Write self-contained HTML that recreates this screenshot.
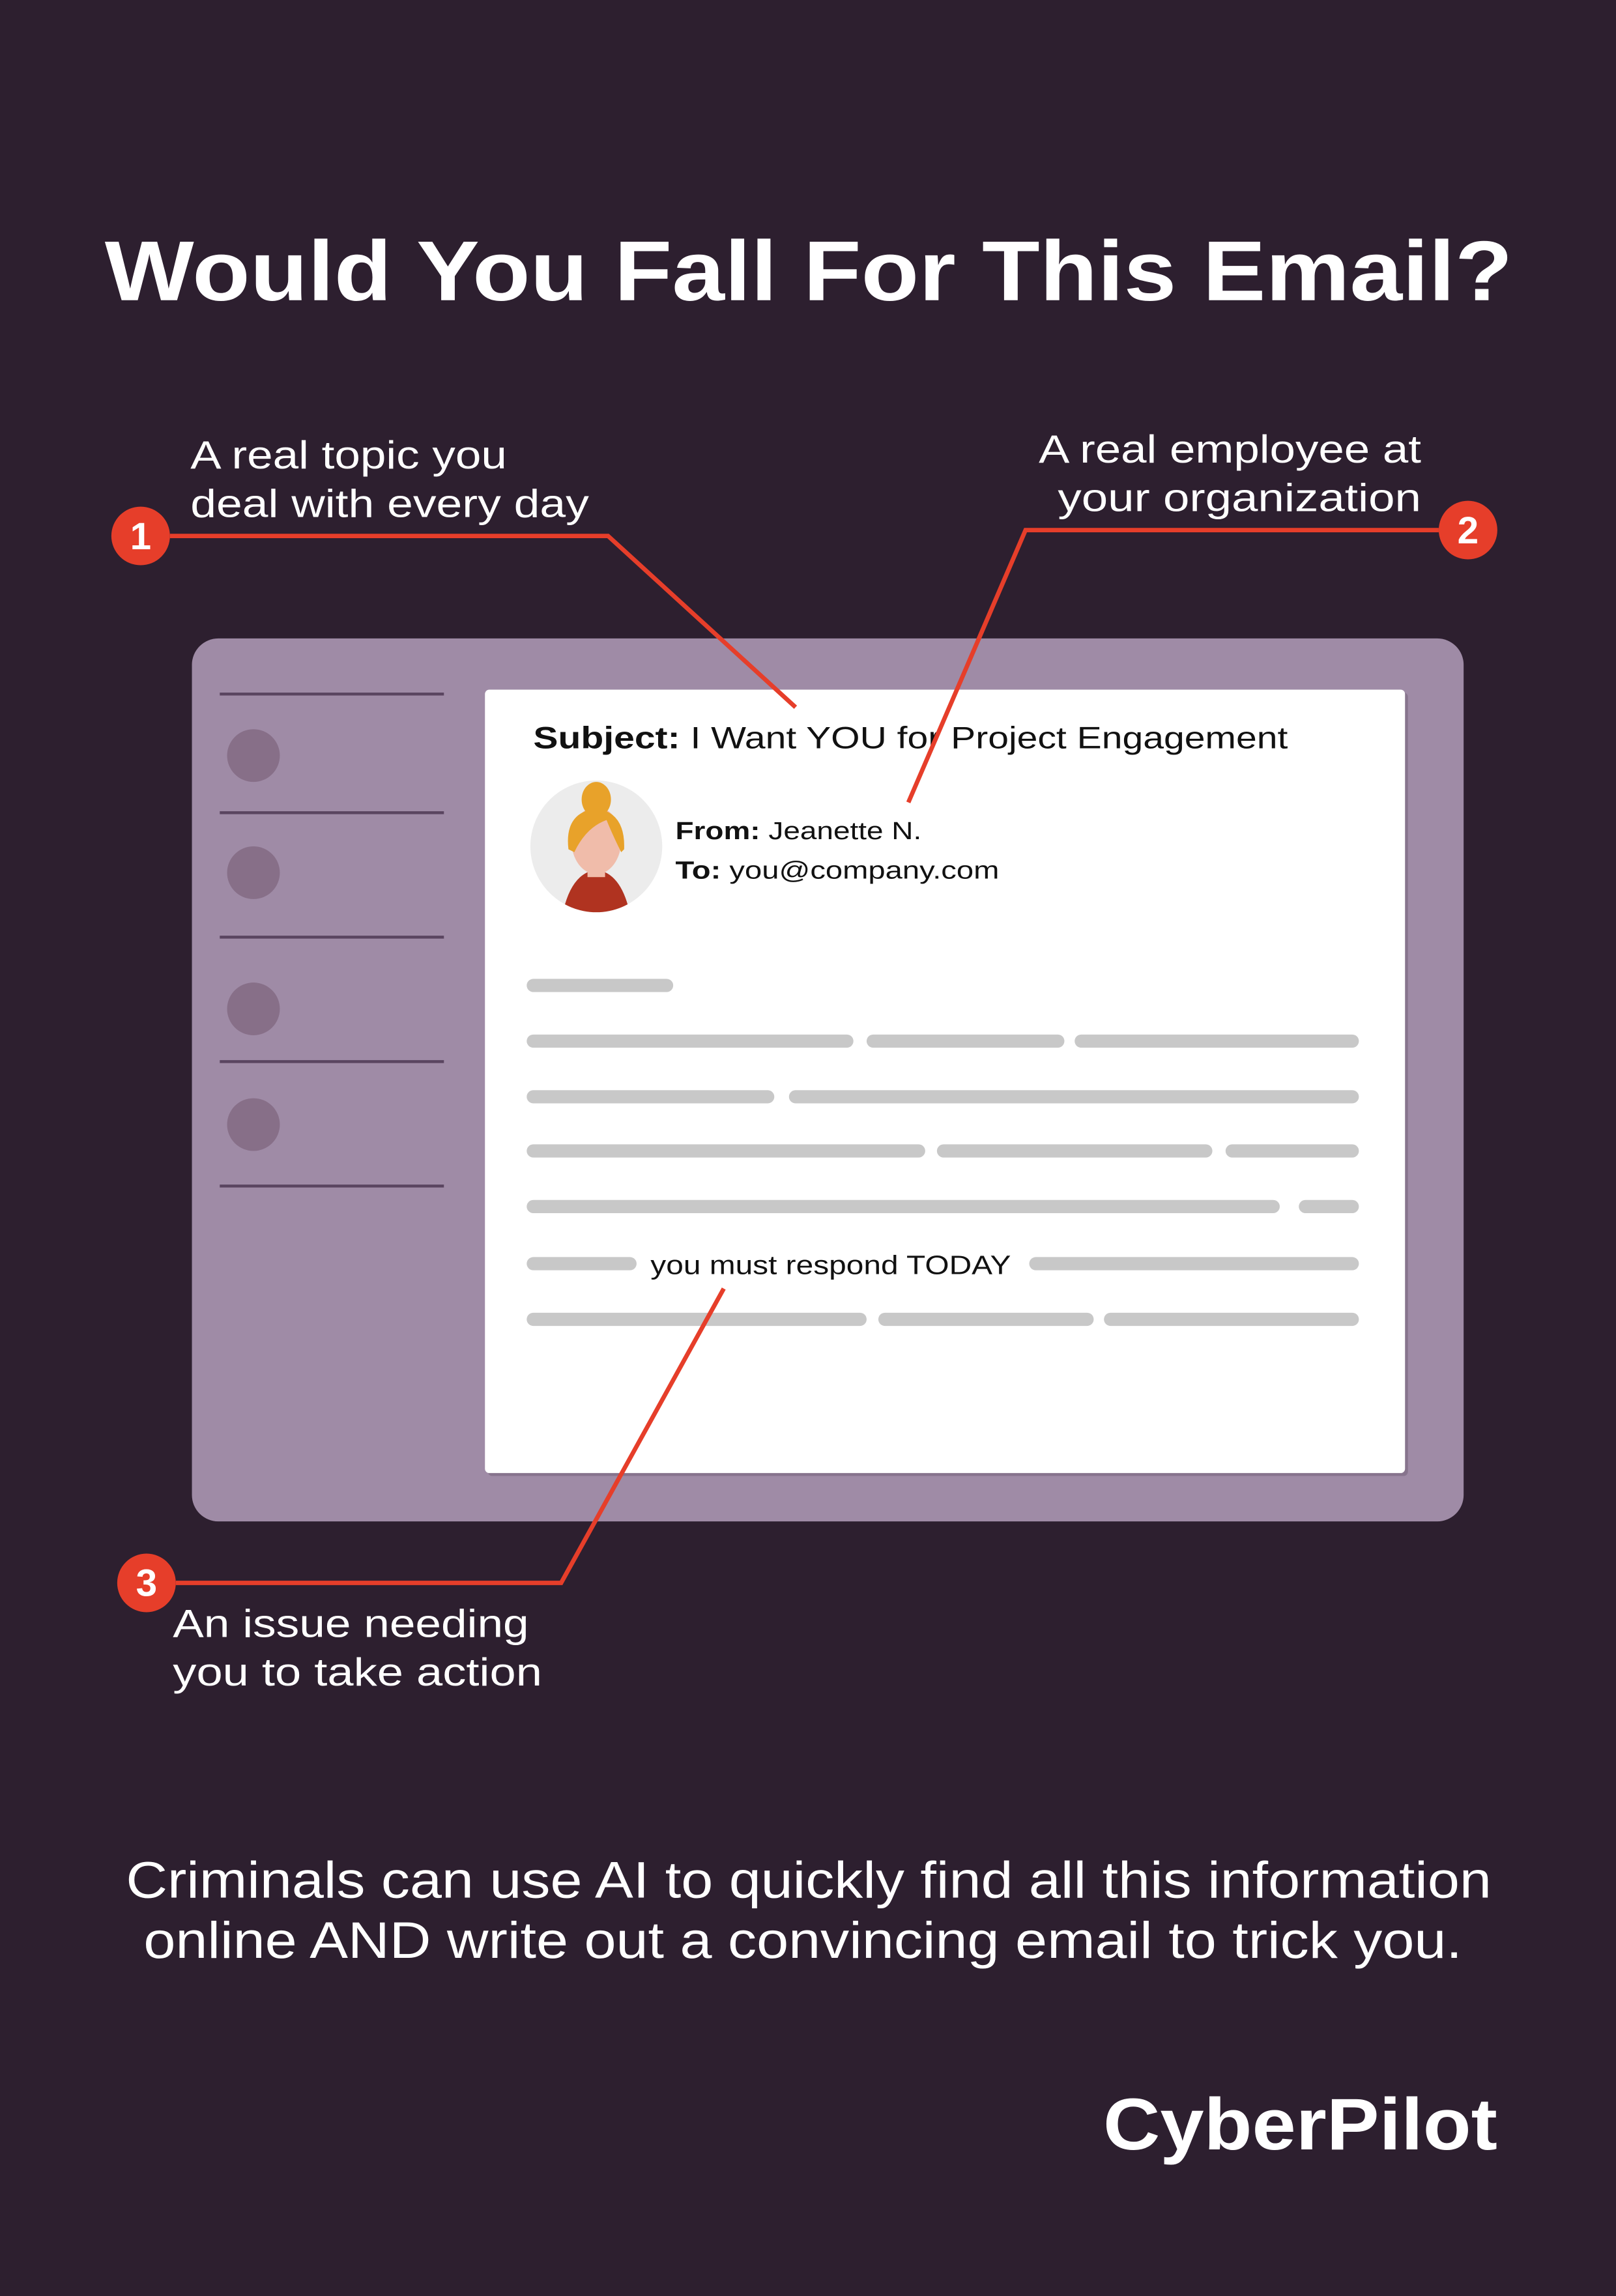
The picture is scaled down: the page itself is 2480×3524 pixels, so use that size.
<!DOCTYPE html>
<html><head><meta charset="utf-8"><style>
html,body{margin:0;padding:0;background:#2d1f2f;}
svg{display:block;}
text{font-family:"Liberation Sans",sans-serif;}
</style></head><body>
<svg width="2480" height="3524" viewBox="0 0 1103 1568" preserveAspectRatio="none" xmlns="http://www.w3.org/2000/svg">
<rect x="0" y="0" width="1103" height="1568" fill="#2d1f2f"/>
<text x="552" y="205" text-anchor="middle" font-size="58" font-weight="bold" fill="#fff" textLength="961" lengthAdjust="spacingAndGlyphs">Would You Fall For This Email?</text>

<g fill="#fff" font-size="27">
<text x="130" y="320" textLength="216" lengthAdjust="spacingAndGlyphs">A real topic you</text>
<text x="130" y="353" textLength="272" lengthAdjust="spacingAndGlyphs">deal with every day</text>
<text x="970" y="316" text-anchor="end" textLength="261" lengthAdjust="spacingAndGlyphs">A real employee at</text>
<text x="970" y="349" text-anchor="end" textLength="248" lengthAdjust="spacingAndGlyphs">your organization</text>
<text x="118" y="1118" textLength="243" lengthAdjust="spacingAndGlyphs">An issue needing</text>
<text x="118" y="1151" textLength="252" lengthAdjust="spacingAndGlyphs">you to take action</text>
</g>

<rect x="131" y="436" width="868" height="603" rx="18" fill="#9f8ba6"/>
<g stroke="#5a4560" stroke-width="2">
<line x1="150" y1="474" x2="303" y2="474"/><line x1="150" y1="555" x2="303" y2="555"/>
<line x1="150" y1="640" x2="303" y2="640"/><line x1="150" y1="725" x2="303" y2="725"/>
<line x1="150" y1="810" x2="303" y2="810"/>
</g>
<g fill="#876f88">
<circle cx="173" cy="516" r="18"/><circle cx="173" cy="596" r="18"/>
<circle cx="173" cy="689" r="18"/><circle cx="173" cy="768" r="18"/>
</g>
<rect x="333" y="473" width="628" height="535" rx="3" fill="#6f5d73" opacity="0.5"/>
<rect x="331" y="471" width="628" height="535" rx="3" fill="#fff"/>

<text x="364" y="511" font-size="21" fill="#111" textLength="515" lengthAdjust="spacingAndGlyphs"><tspan font-weight="bold">Subject:</tspan> I Want YOU for Project Engagement</text>

<circle cx="407" cy="578" r="45" fill="#ececec"/>
<clipPath id="av"><circle cx="407" cy="578" r="45"/></clipPath>
<g clip-path="url(#av)">
<path d="M384 624 Q390 596 407 594 Q424 596 430 624 Z" fill="#b03320"/>
<rect x="401" y="585" width="12" height="14" fill="#f0bcaa"/>
<ellipse cx="407" cy="574" rx="17" ry="23" fill="#f0bcaa"/>
<ellipse cx="407" cy="546" rx="10" ry="12" fill="#e8a22a"/>
<path d="M388 580 Q385 555 407 552 Q427 555 426 580 L424 582 Q418 570 414 560 Q400 565 392 582 Z" fill="#e8a22a"/>
</g>
<text x="461" y="573" font-size="17" fill="#111" textLength="168" lengthAdjust="spacingAndGlyphs"><tspan font-weight="bold">From:</tspan> Jeanette N.</text>
<text x="461" y="600" font-size="17" fill="#111" textLength="221" lengthAdjust="spacingAndGlyphs"><tspan font-weight="bold">To:</tspan> you@company.com</text>

<g stroke="#c8c8c8" stroke-width="9" stroke-linecap="round">
<line x1="364" y1="673" x2="455" y2="673"/>
<line x1="364" y1="711" x2="578" y2="711"/><line x1="596" y1="711" x2="722" y2="711"/><line x1="738" y1="711" x2="923" y2="711"/>
<line x1="364" y1="749" x2="524" y2="749"/><line x1="543" y1="749" x2="923" y2="749"/>
<line x1="364" y1="786" x2="627" y2="786"/><line x1="644" y1="786" x2="823" y2="786"/><line x1="841" y1="786" x2="923" y2="786"/>
<line x1="364" y1="824" x2="869" y2="824"/><line x1="891" y1="824" x2="923" y2="824"/>
<line x1="364" y1="863" x2="430" y2="863"/><line x1="707" y1="863" x2="923" y2="863"/>
<line x1="364" y1="901" x2="587" y2="901"/><line x1="604" y1="901" x2="742" y2="901"/><line x1="758" y1="901" x2="923" y2="901"/>
</g>
<text x="444" y="870" font-size="18" fill="#111" textLength="246" lengthAdjust="spacingAndGlyphs">you must respond TODAY</text>

<g stroke="#e63e2a" stroke-width="3" fill="none" stroke-linejoin="miter">
<polyline points="116,366 415,366 543,483"/>
<polyline points="982,362 700,362 620,548"/>
<polyline points="120,1081 383,1081 494,880"/>
</g>
<g fill="#e63e2a">
<circle cx="96" cy="366" r="20"/><circle cx="1002" cy="362" r="20"/><circle cx="100" cy="1081" r="20"/>
</g>
<g fill="#fff" font-size="26" font-weight="bold" text-anchor="middle">
<text x="96" y="375">1</text><text x="1002" y="371">2</text><text x="100" y="1090">3</text>
</g>

<g fill="#fff" font-size="35" text-anchor="middle">
<text x="552" y="1296" textLength="932" lengthAdjust="spacingAndGlyphs">Criminals can use AI to quickly find all this information</text>
<text x="548" y="1337" textLength="900" lengthAdjust="spacingAndGlyphs">online AND write out a convincing email to trick you.</text>
</g>
<text x="753" y="1468" font-size="50" font-weight="bold" fill="#fff" textLength="269" lengthAdjust="spacingAndGlyphs">CyberPilot</text>
</svg>
</body></html>
